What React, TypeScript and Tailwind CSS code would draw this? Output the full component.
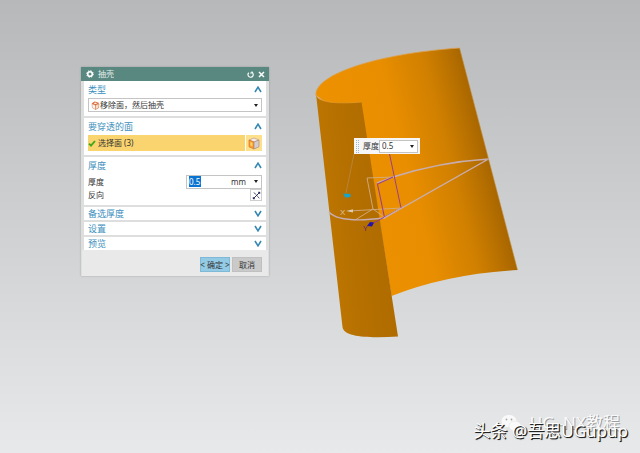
import React, { useState } from 'react';

type SectionProps = {
  title: string;
  open?: boolean;
  children?: React.ReactNode;
};

const Chevron = ({ up }: { up?: boolean }) => (
  <svg viewBox="0 0 8 7" className="h-[7px] w-[8px]" fill="none" stroke="#3587b3" strokeWidth="1.6" aria-hidden="true">
    <path d={up ? 'M1 6 4 1.2 7 6' : 'M1 1 4 5.8 7 1'} />
  </svg>
);

const Caret = () => (
  <svg viewBox="0 0 4 3" className="h-[3px] w-[4px]" aria-hidden="true">
    <path d="M0 0h4L2 3z" fill="#222" />
  </svg>
);

const Section = ({ title, open = false, children }: SectionProps) => {
  const [expanded, setExpanded] = useState(open);

  return (
    <section className="bg-white px-1">
      <button
        type="button"
        onClick={() => setExpanded(!expanded)}
        aria-expanded={expanded}
        className={`flex w-full items-center justify-between text-left text-[9px] text-[#3d8fbd] ${expanded ? 'h-[17px]' : 'h-[13px]'}`}
      >
        <span className="leading-[13px]">{title}</span>
        <Chevron up={expanded} />
      </button>
      {expanded && children}
    </section>
  );
};

const GearIcon = () => (
  <svg viewBox="0 0 8 8" className="h-[8px] w-[8px]" fill="none" stroke="#fff" aria-hidden="true">
    <circle cx="4" cy="4" r="2.3" strokeWidth="1.6" />
    <circle cx="4" cy="4" r="3.3" strokeWidth="1" strokeDasharray="1.3 1.3" />
  </svg>
);

const ResetIcon = () => (
  <svg viewBox="0 0 8 8" className="h-[7px] w-[7px]" fill="none" stroke="#fff" strokeWidth="1.3" aria-hidden="true">
    <path d="M2 2A3 3 0 1 0 5.500 1.500" />
    <path d="M4.600 3.600V1.300h2.200" strokeWidth="1" />
  </svg>
);

const CloseIcon = () => (
  <svg viewBox="0 0 7 7" className="h-[7px] w-[7px]" stroke="#fff" strokeWidth="1.5" aria-hidden="true">
    <path d="M1 1l5 5M6 1 1 6" />
  </svg>
);

const ShellIcon = () => (
  <svg viewBox="0 0 9 9" className="h-[9px] w-[9px]" aria-hidden="true">
    <path d="M1 3 4.500 4v4.500L1.500 7z" fill="#fdf1ea" stroke="#c79a86" strokeWidth=".6" />
    <path d="M8 3 4.500 4v4.500L7.500 7z" fill="#fbdcc6" stroke="#c97a50" strokeWidth=".6" />
    <path d="M.5 2.600 3.600.5 8.500 2 4.600 4.300z" fill="#dd6a36" />
    <path d="M2.600 2.500 4 1.500l2.300.7-1.700.9z" fill="#fff" />
  </svg>
);

const CubeIcon = () => (
  <svg viewBox="0 0 12 13" className="h-[13px] w-[12px]" strokeLinejoin="round" aria-hidden="true">
    <path d="M1 3 6 1l5 2-5 2z" fill="#f7ece6" stroke="#b58e7c" strokeWidth=".6" />
    <path d="M1 3l5 2v7l-5-2.200z" fill="#fb9f22" stroke="#d9702a" strokeWidth=".7" />
    <path d="M11 3 6 5v7l5-2.200z" fill="#d6cccc" stroke="#a58c88" strokeWidth=".7" />
    <path d="M2.400 5l2 .8v3.600l-2-.8z" fill="#ffcf70" />
  </svg>
);

const CheckIcon = () => (
  <svg viewBox="0 0 8 7" className="h-[7px] w-[8px]" fill="none" stroke="#3faa1c" strokeWidth="1.9" aria-hidden="true">
    <path d="M1 3.600 3 5.600 7 1" />
  </svg>
);

const ReverseIcon = () => (
  <svg viewBox="0 0 9 9" className="h-[9px] w-[9px]" fill="none" stroke="#30305f" strokeWidth="1" aria-hidden="true">
    <path d="M1 8 8 1" />
    <path d="M2 1.500 7.500 7.500" strokeDasharray="2 .6" />
    <path d="M6 1h2v2zM3 8H1V6z" fill="#23235e" strokeWidth=".4" />
  </svg>
);

const ShellDialog = () => (
  <form
    aria-label="抽壳"
    onSubmit={(e) => e.preventDefault()}
    className="absolute top-[67px] left-[81px] w-[188px] bg-[#dedede] shadow-[0_0_2px_rgba(0,0,0,0.2)]"
  >
    <header className="flex h-[14px] items-center bg-[#588880] pr-1 pl-[5px] text-white">
      <GearIcon />
      <h1 className="ml-1 flex-1 text-[8px] leading-[14px] text-[#e6efed]">抽壳</h1>
      <button type="button" aria-label="重置" className="mr-1">
        <ResetIcon />
      </button>
      <button type="button" aria-label="关闭">
        <CloseIcon />
      </button>
    </header>

    <div className="flex flex-col gap-[2px] px-[3px]">
      <Section title="类型" open>
        <div className="pb-1">
          <div className="flex h-[14px] items-center border border-[#c4c4c4] bg-white pl-[2px]">
            <ShellIcon />
            <select aria-label="类型" className="h-full min-w-0 flex-1 appearance-none text-[8px] leading-[12px] outline-none">
              <option>移除面，然后抽壳</option>
              <option>对所有面抽壳</option>
            </select>
            <span className="pointer-events-none pr-[3px]">
              <Caret />
            </span>
          </div>
        </div>
      </Section>

      <Section title="要穿透的面" open>
        <div className="flex gap-px pb-[4px]">
          <button type="button" className="flex h-[16px] flex-1 items-center gap-[2px] bg-[#fad46e] text-left text-[8px]">
            <CheckIcon />
            选择面 (3)
          </button>
          <button type="button" aria-label="面规则" className="flex h-[16px] w-[16px] items-center justify-center bg-[#fce08c]">
            <CubeIcon />
          </button>
        </div>
      </Section>

      <Section title="厚度" open>
        <div className="flex h-[15px] items-center justify-between">
          <label htmlFor="thickness" className="text-[8px]">
            厚度
          </label>
          <div className="flex h-[14px] w-[76px] items-center border border-[#c4c4c4] bg-white pr-[3px] pl-[2px]">
            <input id="thickness" defaultValue="0.5" className="h-[11px] w-[12px] bg-[#0a74d2] text-[8px] text-white outline-none" />
            <span className="ml-auto text-[8px]">mm</span>
            <button type="button" aria-label="厚度选项" className="ml-2">
              <Caret />
            </button>
          </div>
        </div>
        <div className="flex items-center justify-between pb-[4px] text-[8px]">
          <span id="reverse">反向</span>
          <button type="button" aria-labelledby="reverse" className="flex h-[12px] w-[12px] items-center justify-center border border-[#cfcfcf] bg-white">
            <ReverseIcon />
          </button>
        </div>
      </Section>

      <Section title="备选厚度" />
      <Section title="设置" />
      <Section title="预览" />
    </div>

    <footer className="mx-px flex justify-end gap-[2px] bg-[#e9e9e9] pt-[7px] pr-[6px] pb-1 text-[8px]">
      <button type="submit" className="flex h-[15px] w-[30px] items-center justify-center bg-[#93cbe6] leading-none whitespace-nowrap ring-1 ring-[#7fb9d6] ring-inset">
        &lt; 确定 &gt;
      </button>
      <button type="button" className="flex h-[15px] w-[30px] items-center justify-center bg-[#cacaca] leading-none ring-1 ring-[#c0c0c0] ring-inset">
        取消
      </button>
    </footer>
  </form>
);

// sheet body with its datum axes and section curves
const Model = () => (
  <svg viewBox="310 40 220 304" className="absolute top-[40px] left-[310px] h-[304px] w-[220px]" fill="none" aria-hidden="true">
    <defs>
      <linearGradient id="inner" gradientUnits="userSpaceOnUse" x1="340" y1="188" x2="489" y2="150">
        <stop offset="0" stopColor="#ed9100" />
        <stop offset=".45" stopColor="#e98e00" />
        <stop offset=".75" stopColor="#cf7f00" />
        <stop offset="1" stopColor="#a66500" />
      </linearGradient>
      <linearGradient id="flap" gradientUnits="userSpaceOnUse" x1="328" y1="212" x2="382" y2="206">
        <stop offset="0" stopColor="#bd7500" />
        <stop offset=".4" stopColor="#b57000" />
        <stop offset="1" stopColor="#b06c00" />
      </linearGradient>
    </defs>

    <path d="M316 95C315 75 374 54 459.500 48L517.500 270Q447 274 391.500 296L361 104 330 106Z" fill="url(#inner)" />
    <path d="M316 95C315 75 374 54 459.500 48" stroke="#dba04c" strokeWidth=".8" />
    <path d="M459.500 48 517.500 270" stroke="#c08c3c" strokeWidth=".6" />
    <path d="M316 94C317 103 338 104 361.500 102L398 336.500C372 338 344 338 342.500 327Z" fill="url(#flap)" />
    <path d="M316 94C317 103 338 104 361.500 102" stroke="#e59a26" strokeWidth=".8" />

    <path d="M329 212C337 221 360 221 384 218L488.500 159Q440 162 393 177L377 183" stroke="#c8adb0" strokeWidth="1.400" />
    <path d="M393 177 367 178 373 209 355 220M349 211 401 208M373 209 384 217" stroke="#d3ad85" strokeWidth=".9" />
    <path d="M389.500 154 401 208 370 225" stroke="#9c3f86" strokeWidth="1" />
    <path d="M393 177 377.500 184 384.500 217.500" stroke="#9c3f86" strokeWidth="1.100" />
    <path d="M401 208 384 218" stroke="#c8adb0" strokeWidth="1.300" />

    <path d="M354 154 346 193" stroke="#b98d4d" strokeWidth=".7" />
    <path d="M343 193.500l7.500.5v3l-5 .8z" fill="#18a4c8" />
    <path d="M346 211l7-1.800v3.400z" fill="#dccbb0" />
    <path d="M367 226l3-4 4 .5-2 4z" fill="#2413a8" />
    <text x="340" y="214.500" fontSize="8" fill="#e0c29a" fontFamily="Liberation Sans, sans-serif">X</text>
    <text x="363" y="230.500" fontSize="7" fill="#6a2470" fontFamily="Liberation Sans, sans-serif">Y</text>
  </svg>
);

const ThicknessPopup = () => (
  <div className="absolute top-[138px] left-[354px] flex h-[16px] w-[66px] items-center bg-[#f6f6f6] px-[2px] text-[8px]">
    <span className="h-[13px] w-[3px] border-x border-dotted border-[#9fb8cc]" />
    <label htmlFor="onscreen" className="ml-auto">
      厚度
    </label>
    <div className="flex h-[13px] w-[39px] items-center border border-[#c4c4c4] bg-white pr-[3px] pl-[2px]">
      <input id="onscreen" defaultValue="0.5" className="h-[11px] w-0 min-w-0 flex-1 outline-none" />
      <button type="button" aria-label="厚度选项">
        <Caret />
      </button>
    </div>
  </div>
);

const Watermark = () => (
  <div className="pointer-events-none absolute right-[12px] bottom-[10px] text-[17px] leading-[24px] whitespace-nowrap text-white">
    <div className="absolute right-[8px] bottom-[8px] flex items-center gap-2 opacity-80 [text-shadow:1px_1px_0_#8d8d8d]">
      <svg viewBox="0 0 21 18" className="h-[18px] w-[21px]" fill="#fff" aria-hidden="true">
        <path d="M8 1C3.500 1 .5 3.700.5 7c0 2 1 3.600 2.700 4.700L2.600 14l2.600-1.300C10.500 14 15.500 11 15.500 7c0-3.300-3-6-7.500-6z" />
        <path d="M14 7c-3.600 0-6 2.200-6 5s2.600 5 6 5l2-.3 2.200 1.200-.6-1.900c1.500-1 2.400-2.300 2.400-4 0-2.800-2.600-5-6-5z" stroke="#e2e3e5" strokeWidth=".6" />
        <g fill="#999">
          <circle cx="5.500" cy="5.500" r=".9" />
          <circle cx="10.500" cy="5.500" r=".9" />
        </g>
      </svg>
      UG–NX教程
    </div>
    <div className="relative [text-shadow:1px_1px_0_#222,1px_1px_1px_#444]">头条 @吾思UGupup</div>
  </div>
);

const App: React.FC = () => (
  <main className="relative min-h-screen overflow-hidden bg-linear-to-b from-[#b7b8ba] to-[#e8e9ea] font-['Noto_Sans','Noto_Sans_CJK_SC',sans-serif] text-[#333]">
    <Model />
    <ShellDialog />
    <ThicknessPopup />
    <Watermark />
  </main>
);

export default App;
